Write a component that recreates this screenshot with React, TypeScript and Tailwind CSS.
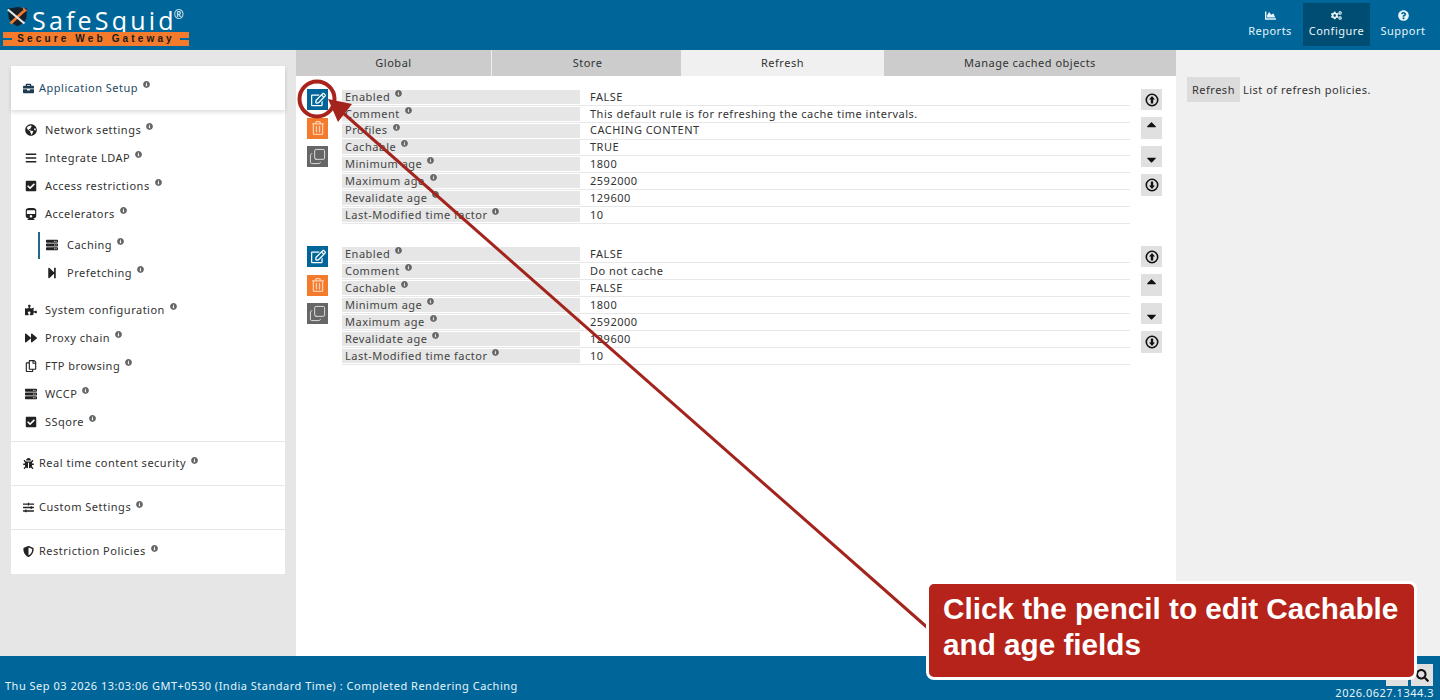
import React from "react";
import { FaBriefcase, FaGlobeAmericas, FaBars, FaCheckSquare, FaTrain, FaServer, FaStepForward, FaPuzzlePiece, FaForward, FaRegCopy, FaBug, FaSlidersH, FaShieldAlt, FaInfoCircle, FaChartArea, FaCogs, FaQuestionCircle, FaRegEdit, FaRegTrashAlt, FaCaretUp, FaCaretDown, FaSearch } from "react-icons/fa";
import { Copy } from "lucide-react";

const Info = () => <FaInfoCircle className="text-[7px] text-[#666] ml-[5px] -mt-[7px] shrink-0" />;

function Item({ icon, label, indent }: { icon: React.ReactNode; label: string; indent?: boolean }) {
  return (
    <div className={`h-7 flex items-center ${indent ? "pl-[35px]" : "pl-[14px]"}`}>
      <span className={`flex justify-start text-[12px] text-[#222] ${indent ? "w-[21px]" : "w-[20px]"}`}>{icon}</span>
      <span className="text-[#333]">{label}</span>
      <Info />
    </div>
  );
}

function Section({ icon, label }: { icon: React.ReactNode; label: string }) {
  return (
    <div className="h-11 flex items-center pl-[12px] border-t border-[#e8e8e8]">
      <span className="w-[16px] text-[11px] text-[#222]">{icon}</span>
      <span className="text-[#333]">{label}</span>
      <Info />
    </div>
  );
}

function Row({ label, value, tight }: { label: string; value: string; tight?: boolean }) {
  return (
    <div className={`flex items-center border-b border-[#e8e8e8] ${tight ? "h-[16.85px]" : "h-[17px]"}`}>
      <div className="w-[238px] h-[14px] bg-[#e6e6e6] pl-[3px] flex items-center text-[#444]">
        {label}
        <Info />
      </div>
      <div className="pl-[10px] text-[#333]">{value}</div>
    </div>
  );
}

const CircleArrow = ({ down }: { down?: boolean }) => (
  <svg viewBox="0 0 14 14" className={`w-[14px] h-[14px] ${down ? "rotate-180" : ""}`}>
    <circle cx="7" cy="7" r="5.7" fill="none" stroke="#111" strokeWidth="1.6" />
    <path d="M7 3 L10 6.6 H8.2 V10.5 H5.8 V6.6 H4 Z" fill="#111" />
  </svg>
);

const sq = "w-[21px] h-[21px] flex items-center justify-center";

function Block({ rows, tight }: { rows: [string, string][]; tight?: boolean }) {
  return (
    <div className="flex h-[157px]">
      <div className="w-[21px] ml-[11px] flex flex-col gap-[7.5px] text-white">
        <div className={`${sq} bg-[#006699] text-[15px]`}><FaRegEdit className="ml-[2px]" /></div>
        <div className={`${sq} bg-[#f47a2c] text-[14px] text-[#fbd0b0]`}><FaRegTrashAlt /></div>
        <div className={`${sq} bg-[#666666] text-[#e4e4e4]`}><Copy size={17} strokeWidth={1.3} className="-scale-x-100 rotate-180" /></div>
      </div>
      <div className="w-[788px] ml-[14px]">
        {rows.map(([l, v]) => <Row key={l} label={l} value={v} tight={tight} />)}
      </div>
      <div className="w-[21px] ml-[11px] flex flex-col gap-[7px] text-[#111]">
        <div className="w-[21px] h-[21px] flex items-center justify-center bg-[#e0e0e0]"><CircleArrow /></div>
        <div className="w-[21px] h-[22px] flex items-start justify-center bg-[#e0e0e0] text-[15px]"><FaCaretUp /></div>
        <div className="w-[21px] h-[21px] flex items-end justify-center bg-[#e0e0e0] text-[15px]"><FaCaretDown /></div>
        <div className="w-[21px] h-[22px] flex items-center justify-center bg-[#e0e0e0]"><CircleArrow down /></div>
      </div>
    </div>
  );
}

const Nav = ({ icon, label, active, w }: { icon: React.ReactNode; label: string; active?: boolean; w: string }) => (
  <div className={`h-[43px] flex flex-col items-center justify-center gap-[2px] text-[#e6f4fa] ${w} ${active ? "bg-[#004d73]" : ""}`}>
    <span className="text-[11px]">{icon}</span>
    <span>{label}</span>
  </div>
);

export default function App() {
  return (
    <div className="relative w-[1440px] h-[700px] overflow-hidden flex flex-col bg-white text-[11px] tracking-[0.5px]" style={{ fontFamily: '"Noto Sans", sans-serif' }}>
      <header className="h-[50px] shrink-0 bg-[#006699] flex justify-between">
        <div className="relative w-[200px]">
          <svg viewBox="0 0 26 24" className="absolute left-[6px] top-[6px] w-[23px] h-[21px]">
            <path d="M2 3 L13 1 L24 3 L23 14 Q20 20 13 23 Q6 20 3 14 Z" fill="#14202a" />
            <path d="M5 20 L20 6" stroke="#f47a2c" strokeWidth="3" />
            <path d="M19 1 L24 5 L20 8 Z" fill="#f47a2c" />
            <path d="M2 4 L21 20" stroke="#e8e8e8" strokeWidth="2.6" />
          </svg>
          <div className="absolute left-[32px] top-0 text-white font-medium text-[25px] tracking-[3.2px] leading-[30px] whitespace-nowrap" style={{ fontFamily: '"Open Sans", sans-serif' }}>
            SafeSquid<span className="text-[12px] font-normal tracking-normal align-[11px] -ml-[3px]">®</span>
          </div>
          <div className="absolute left-[3px] top-[32px] w-[186px] h-[14px] bg-[#f47a2c] flex items-center justify-center">
            <div className="absolute left-0 top-[6px] w-[9px] h-[2px] bg-[#006699]" />
            <div className="absolute right-0 top-[6px] w-[9px] h-[2px] bg-[#006699]" />
            <span className="text-[10px] font-bold text-[#1a1a1a] tracking-[3.15px] leading-none whitespace-nowrap" style={{ fontFamily: '"Liberation Sans", sans-serif' }}>Secure Web Gateway</span>
          </div>
        </div>
        <nav className="flex items-start pt-[3px] pr-[4px]">
          <Nav w="w-[66px]" icon={<FaChartArea />} label="Reports" />
          <Nav w="w-[67px]" active icon={<FaCogs />} label="Configure" />
          <Nav w="w-[66px]" icon={<FaQuestionCircle />} label="Support" />
        </nav>
      </header>

      <div className="flex flex-1 min-h-0">
        <aside className="w-[296px] shrink-0 bg-[#e6e6e6] pt-4 pl-[11px]">
          <div className="w-[274px] bg-white">
            <div className="h-11 flex items-center pl-[12px] shadow-[0_2px_4px_rgba(0,0,0,0.15)] relative">
              <span className="w-[16px] text-[11px] text-[#1d3c52]"><FaBriefcase /></span>
              <span className="text-[#1d4a63]">Application Setup</span>
              <Info />
            </div>
            <div className="pt-[6px] pb-[5px]">
              <Item icon={<FaGlobeAmericas />} label="Network settings" />
              <Item icon={<FaBars />} label="Integrate LDAP" />
              <Item icon={<FaCheckSquare />} label="Access restrictions" />
              <Item icon={<FaTrain />} label="Accelerators" />
              <div className="mt-[3px] mb-[9px] relative">
                <div className="absolute left-[27px] top-[1px] h-[27px] w-[2px] bg-[#1d6a8a]" />
                <Item indent icon={<FaServer />} label="Caching" />
                <Item indent icon={<FaStepForward />} label="Prefetching" />
              </div>
              <Item icon={<FaPuzzlePiece />} label="System configuration" />
              <Item icon={<FaForward />} label="Proxy chain" />
              <Item icon={<FaRegCopy />} label="FTP browsing" />
              <Item icon={<FaServer />} label="WCCP" />
              <Item icon={<FaCheckSquare />} label="SSqore" />
            </div>
            <Section icon={<FaBug />} label="Real time content security" />
            <Section icon={<FaSlidersH />} label="Custom Settings" />
            <div className="pb-[1px]"><Section icon={<FaShieldAlt />} label="Restriction Policies" /></div>
          </div>
        </aside>

        <main className="w-[880px] shrink-0 bg-white">
          <div className="h-[26px] flex bg-[#cccccc] text-[#333]">
            <div className="w-[196px] flex items-center justify-center border-r border-[#eee]">Global</div>
            <div className="w-[189px] flex items-center justify-center pl-[2px]">Store</div>
            <div className="w-[203px] flex items-center justify-center bg-[#f0f0f0]">Refresh</div>
            <div className="flex-1 flex items-center justify-center">Manage cached objects</div>
          </div>
          <div className="pt-[13px]">
            <Block tight rows={[["Enabled", "FALSE"], ["Comment", "This default rule is for refreshing the cache time intervals."], ["Profiles", "CACHING CONTENT"], ["Cachable", "TRUE"], ["Minimum age", "1800"], ["Maximum age", "2592000"], ["Revalidate age", "129600"], ["Last-Modified time factor", "10"]]} />
            <Block rows={[["Enabled", "FALSE"], ["Comment", "Do not cache"], ["Cachable", "FALSE"], ["Minimum age", "1800"], ["Maximum age", "2592000"], ["Revalidate age", "129600"], ["Last-Modified time factor", "10"]]} />
          </div>
        </main>

        <aside className="flex-1 bg-[#f0f0f0] pt-[27px] pl-[11px] text-[#333]">
          <div className="flex items-center">
            <span className="h-[25px] pl-[5px] w-[53px] flex items-center bg-[#dcdcdc] pt-[1px]">Refresh</span>
            <span className="ml-[3px] pt-[1px]">List of refresh policies.</span>
          </div>
        </aside>
      </div>

      <footer className="h-[44px] shrink-0 bg-[#006699] text-[#e6f4fa] flex justify-between relative">
        <div className="pl-[5px] pt-[22px]">Thu Sep 03 2026 13:03:06 GMT+0530 (India Standard Time) : Completed Rendering Caching</div>
        <div className="pr-[6px] flex flex-col items-end pt-[8px]">
          <div className="flex gap-[3px] pr-[1px]">
            <div className="w-[22px] h-[22px] bg-[#e0e0e0]" />
            <div className="w-[22px] h-[22px] bg-[#e0e0e0] flex items-center justify-center text-[#111] text-[13px]"><FaSearch /></div>
          </div>
          <div className="leading-[14px]">2026.0627.1344.3</div>
        </div>
      </footer>

      <svg className="absolute inset-0 w-[1440px] h-[700px] pointer-events-none" viewBox="0 0 1440 700">
        <circle cx="317" cy="99" r="17.5" fill="none" stroke="#a9231c" strokeWidth="4" />
        <line x1="929" y1="629" x2="342" y2="112" stroke="#a3231d" strokeWidth="3" />
        <polygon points="328,99 352,104 338,122" fill="#a3231d" />
      </svg>

      <div className="absolute left-[926px] top-[581px] w-[491px] h-[99px] bg-[#b5231a] border-[3px] border-white rounded-[8px] pl-[14px] pr-[8px] pt-[7px] text-white text-[29.7px] font-bold leading-[36px] tracking-normal" style={{ fontFamily: '"Liberation Sans", sans-serif' }}>
        Click the pencil to edit Cachable and age fields
      </div>
    </div>
  );
}
